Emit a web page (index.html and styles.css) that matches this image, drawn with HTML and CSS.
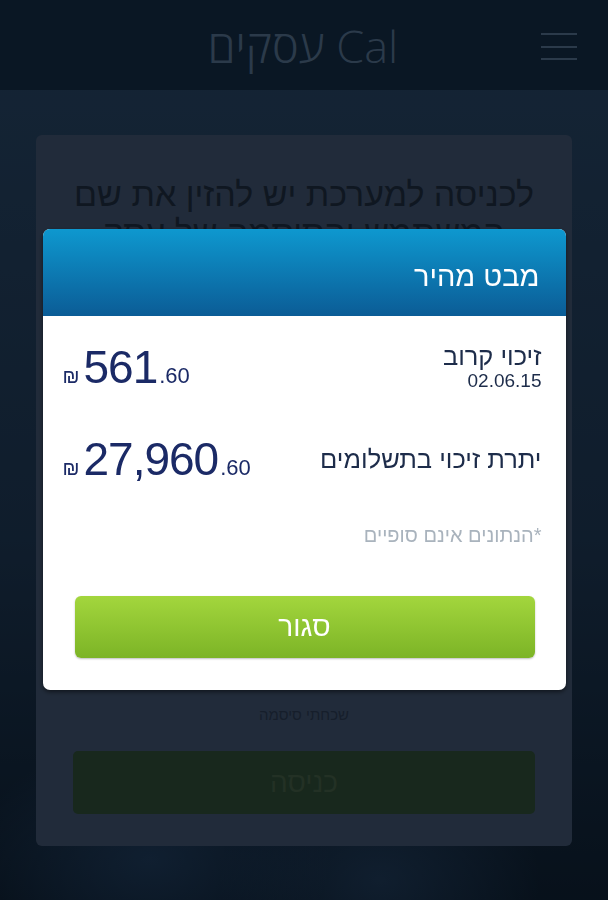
FILE: index.html
```html
<!DOCTYPE html>
<html lang="he" dir="rtl">
<head>
<meta charset="UTF-8" />
<meta name="viewport" content="width=device-width, initial-scale=1" />
<title>Cal עסקים</title>
<link rel="stylesheet" href="styles.css">
</head>
<body>

<div class="topbar">
  <div class="brand">Cal עסקים</div>
  <div class="burger"><span></span><span></span><span></span></div>
</div>

<div class="page">
  <div class="login-card">
    <p class="intro">לכניסה למערכת יש להזין את שם המשתמש והסיסמה של עסק</p>
    <div class="spacer"></div>
    <div class="forgot">שכחתי סיסמה</div>
    <button class="login-btn">כניסה</button>
  </div>
</div>

<div class="overlay">
  <div class="modal">
    <div class="modal-head">מבט מהיר</div>
    <div class="modal-body">
      <div class="row row-first">
        <div class="label">
          <div class="label-title">זיכוי קרוב</div>
          <div class="label-date">02.06.15</div>
        </div>
        <div class="amount"><span class="shekel">₪</span><span class="int">561</span><span class="dec">.60</span></div>
      </div>
      <div class="row row-second">
        <div class="label">
          <div class="label-title">יתרת זיכוי בתשלומים</div>
        </div>
        <div class="amount"><span class="shekel">₪</span><span class="int">27,960</span><span class="dec">.60</span></div>
      </div>
      <div class="note">*הנתונים אינם סופיים</div>
      <button class="close-btn">סגור</button>
    </div>
  </div>
</div>

</body>
</html>
```

FILE: styles.css
```css
body {
  margin: 0; font-family: "Liberation Sans", Arial, sans-serif;
  background: #234060; height: 900px; overflow: hidden;
  background-image:
    radial-gradient(ellipse 180px 120px at 150px 860px, rgba(60,110,170,.35), transparent),
    radial-gradient(ellipse 160px 120px at 380px 880px, rgba(70,120,180,.3), transparent),
    linear-gradient(#2a4a6c, #1f3a58 60%, #0f2236);
}
.topbar {
  height: 90px; background: #152e48; position: relative;
  display: flex; align-items: center; justify-content: center;
}
.brand {
  font-family: "Open Sans", "DejaVu Sans", sans-serif; font-weight: 300;
  font-size: 45px; color: #577595; margin-right: 2px;
}
.burger {
  position: absolute; right: 31px; top: 33px;
  display: flex; flex-direction: column; gap: 10.5px;
}
.burger span {
  display: block; width: 36px; height: 2px; background: #577595;
}
.page {
  padding: 45px 36px 0;
}
.login-card {
  height: 711px; background: #435774; border-radius: 6px;
  display: flex; flex-direction: column; align-items: center;
}
.intro {
  margin: 40px 30px 0; text-align: center; font-size: 34px; line-height: 38px;
  color: #1f2e42;
}
.spacer { flex: 1; }
.forgot {
  font-size: 15px; color: #2c3d57; margin-bottom: 28px;
}
.login-btn {
  width: 462px; height: 63px; margin-bottom: 32px;
  background: #30503a; border: 0; border-radius: 5px;
  font-family: inherit; font-size: 28px; color: #46624a;
}

/* quick-view popup */
.overlay {
  position: fixed; top: 0; left: 0; width: 100%; height: 100%;
  background: rgba(0,0,0,.5);
  display: flex; justify-content: center; align-items: flex-start;
}
.modal {
  margin-top: 229px; width: 523px; background: #fff;
  border-radius: 7px; overflow: hidden;
  box-shadow: 0 2px 4px rgba(0,0,0,.5);
}
.modal-head {
  height: 87px; padding: 8px 26px 0; box-sizing: border-box;
  display: flex; align-items: center;
  background: linear-gradient(#0e98cf, #0b5c96);
  color: #fff; font-size: 29px;
}
.modal-body {
  padding: 24px 24px 32px 20px;
}
.row {
  display: flex; justify-content: space-between; align-items: center;
}
.row-second { margin-top: 38px; }
.label { color: #1d2c4a; }
.label-title { font-size: 25.5px; line-height: 28px; }
.label-date { font-size: 19px; line-height: 22px; text-align: right; direction: ltr; }
.amount {
  direction: ltr; color: #1b2a66; white-space: nowrap;
}
.shekel { font-size: 20px; margin-right: 4px; }
.int { font-size: 46px; letter-spacing: -1px; }
.dec { font-size: 22px; margin-left: 2px; }
.note {
  margin-top: 38px; font-size: 20px; color: #a9b3bd;
}
.close-btn {
  display: block; height: 62px; margin: 49px 7px 0 12px; width: calc(100% - 19px);
  border: 0; border-radius: 6px;
  background: linear-gradient(#a3d63d, #7cb426);
  box-shadow: 0 1px 2px rgba(0,0,0,.25);
  font-family: inherit; font-size: 28px; color: #fff;
}
```
